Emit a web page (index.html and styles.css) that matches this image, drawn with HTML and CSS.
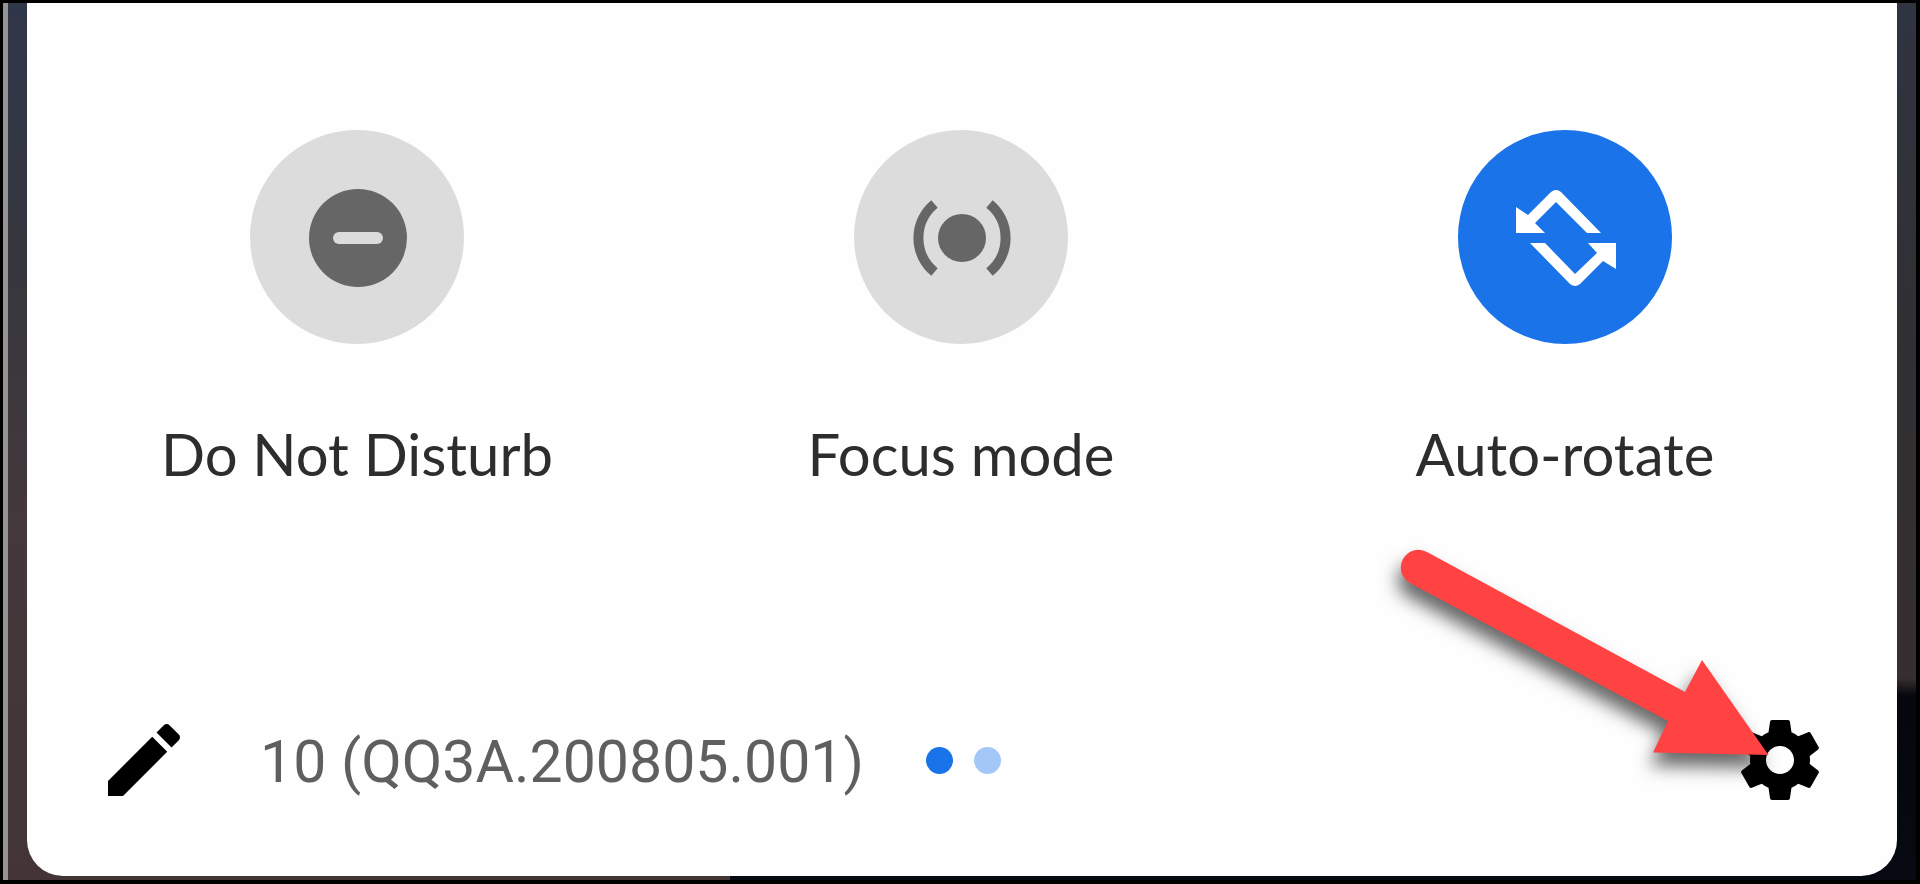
FILE: index.html
```html
<!DOCTYPE html>
<html lang="en">
<head>
<meta charset="utf-8">
<title>Quick settings</title>
<link rel="stylesheet" href="styles.css">
</head>
<body>
<div class="screen">
  <main class="panel">
    <section class="tiles">
      <button class="tile" type="button" aria-pressed="false">
        <span class="tile-icon">
          <svg viewBox="0 0 214 214" aria-hidden="true"><circle cx="108" cy="108" r="49" fill="#666"/><rect x="83" y="102" width="50" height="12" rx="6" fill="#dcdcdc"/></svg>
        </span>
        <span class="tile-label">Do Not Disturb</span>
      </button>
      <button class="tile" type="button" aria-pressed="false">
        <span class="tile-icon">
          <svg viewBox="0 0 214 214" aria-hidden="true"><circle cx="108" cy="108" r="24" fill="#666"/><path d="M80.500 74A44 44 0 0 0 80.500 142M135.500 74A44 44 0 0 1 135.500 142" fill="none" stroke="#666" stroke-width="10"/></svg>
        </span>
        <span class="tile-label">Focus mode</span>
      </button>
      <button class="tile tile-on" type="button" aria-pressed="true">
        <span class="tile-icon">
          <svg viewBox="0 0 214 214" aria-hidden="true"><g fill="#fff"><path d="M58 103V77L70 85L93 62Q98 58 103 62L143 103H129L98 72L77 93L87 103Z"/><path d="M158 113V139L145 131L122 154Q117 158 112 154L72 113H87L117 144L139 123L130 113Z"/></g></svg>
        </span>
        <span class="tile-label">Auto-rotate</span>
      </button>
    </section>
    <footer class="footer">
      <button class="icon-button" type="button" aria-label="Edit">
        <svg viewBox="0 0 24 24" aria-hidden="true"><path d="M3 17.250V21h3.750L17.810 9.940l-3.750-3.750L3 17.250zM20.710 7.040c.39-.39.39-1.020 0-1.410l-2.340-2.340c-.39-.39-1.020-.39-1.410 0l-1.830 1.830 3.750 3.750 1.830-1.830z"/></svg>
      </button>
      <span class="version">10 (QQ3A.200805.001)</span>
      <span class="pages"><i class="dot dot-current"></i><i class="dot"></i></span>
      <button class="icon-button settings" type="button" aria-label="Settings">
        <svg viewBox="0 0 24 24" aria-hidden="true"><path d="M19.430 12.980c.04-.32.07-.64.07-.98s-.03-.66-.07-.98l2.110-1.650c.19-.15.24-.42.12-.64l-2-3.460c-.12-.22-.39-.3-.61-.22l-2.490 1c-.52-.4-1.080-.73-1.690-.98l-.38-2.650C14.460 2.180 14.250 2 14 2h-4c-.25 0-.46.18-.49.42l-.38 2.650c-.61.25-1.170.59-1.690.98l-2.490-1c-.23-.09-.49 0-.61.22l-2 3.460c-.13.22-.07.49.12.64l2.110 1.650c-.04.32-.07.65-.07.98s.03.66.07.98l-2.110 1.650c-.19.15-.24.42-.12.64l2 3.460c.12.22.39.3.61.22l2.490-1c.52.4 1.080.73 1.690.98l.38 2.650c.03.24.24.42.49.42h4c.25 0 .46-.18.49-.42l.38-2.650c.61-.25 1.170-.59 1.690-.98l2.490 1c.23.09.49 0 .61-.22l2-3.460c.12-.22.07-.49-.12-.64l-2.110-1.650zM12 15.500c-1.930 0-3.500-1.570-3.500-3.500s1.570-3.500 3.500-3.500 3.500 1.570 3.500 3.500-1.570 3.500-3.500 3.500z"/></svg>
        <svg class="pointer" viewBox="0 0 400 240" aria-hidden="true"><path d="M47 32L305 172L322 140L388.500 235L273 232.500L288 201L30 63A17.500 17.500 0 0 1 47 32Z" fill="#ff4242"/></svg>
      </button>
    </footer>
  </main>
</div>
</body>
</html>
```
FILE: styles.css
```css
* { box-sizing: border-box; }

body {
  margin: 0;
  background: #000;
  font-family: Lato, "Liberation Sans", sans-serif;
}

.screen {
  min-height: 100vh;
  padding: 0 19px 4px 19px;
  border: solid #000;
  border-width: 3px 4px 4px 3px;
  background:
    linear-gradient(#969492, #969492) left / 5px 100% no-repeat,
    linear-gradient(#303441, #303032 40%, #362e30 77%, #05070d 79%, #070a12) right / 62% 100% no-repeat,
    linear-gradient(#30364a, #37373c 34%, #44383c 60%, #433535);
  display: flex;
}

.panel {
  flex: 1;
  margin-left: 5px;
  display: flex;
  flex-direction: column;
  justify-content: space-between;
  background: #fefefe;
  border-radius: 0 0 36px 36px;
}

.tiles {
  display: grid;
  grid-template-columns: repeat(3, 1fr);
  padding: 127px 30px 0 28px;
}

button {
  border: 0;
  padding: 0;
  background: none;
  font: inherit;
  cursor: pointer;
}

.tile {
  display: flex;
  flex-direction: column;
  align-items: center;
  gap: 74px;
}

.tile-icon {
  width: 214px;
  height: 214px;
  border-radius: 50%;
  background: #dcdcdc;
}

.tile-on .tile-icon { background: #1a73e8; }

svg {
  display: block;
  width: 100%;
  height: 100%;
}

.tile-label {
  font-size: 58px;
  line-height: 72px;
  color: #2d2d2d;
  white-space: nowrap;
}

.footer {
  display: flex;
  align-items: center;
  padding: 0 69px;
  margin-bottom: 68px;
}

.icon-button {
  width: 96px;
  height: 96px;
}

.version {
  margin-left: 68px;
  padding-top: 4px;
  font-family: Roboto, sans-serif;
  font-size: 59px;
  line-height: 72px;
  color: #5f5f5f;
}

.pages {
  display: flex;
  gap: 21px;
  margin-left: 62px;
}

.dot {
  width: 27px;
  height: 27px;
  border-radius: 50%;
  background: #a3c7f6;
}

.dot-current { background: #1a73e8; }

.settings {
  position: relative;
  margin-left: auto;
}

.pointer {
  position: absolute;
  right: 48px;
  bottom: 48px;
  width: 400px;
  height: 240px;
  overflow: visible;
  pointer-events: none;
  filter: drop-shadow(-3px 13px 9px rgba(0, 0, 0, 0.6));
}
```
